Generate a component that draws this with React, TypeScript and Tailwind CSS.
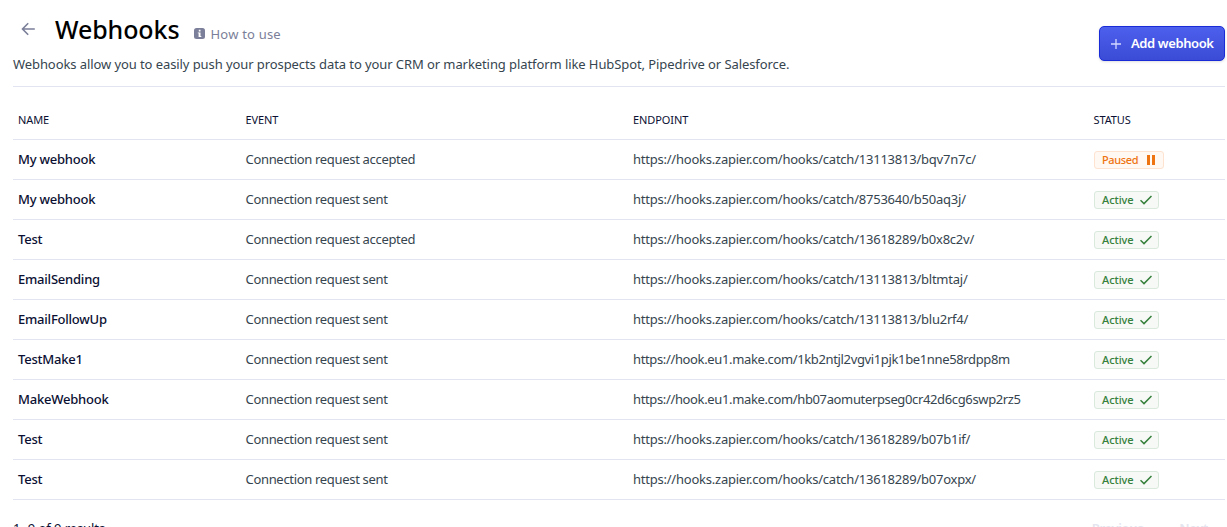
import clsx from "clsx";

type Status = "Active" | "Paused";

interface Webhook {
  name: string;
  event: string;
  endpoint: string;
  status: Status;
}

const WEBHOOKS: Webhook[] = [
  { name: "My webhook", event: "Connection request accepted", endpoint: "https://hooks.zapier.com/hooks/catch/13113813/bqv7n7c/", status: "Paused" },
  { name: "My webhook", event: "Connection request sent", endpoint: "https://hooks.zapier.com/hooks/catch/8753640/b50aq3j/", status: "Active" },
  { name: "Test", event: "Connection request accepted", endpoint: "https://hooks.zapier.com/hooks/catch/13618289/b0x8c2v/", status: "Active" },
  { name: "EmailSending", event: "Connection request sent", endpoint: "https://hooks.zapier.com/hooks/catch/13113813/bltmtaj/", status: "Active" },
  { name: "EmailFollowUp", event: "Connection request sent", endpoint: "https://hooks.zapier.com/hooks/catch/13113813/blu2rf4/", status: "Active" },
  { name: "TestMake1", event: "Connection request sent", endpoint: "https://hook.eu1.make.com/1kb2ntjl2vgvi1pjk1be1nne58rdpp8m", status: "Active" },
  { name: "MakeWebhook", event: "Connection request sent", endpoint: "https://hook.eu1.make.com/hb07aomuterpseg0cr42d6cg6swp2rz5", status: "Active" },
  { name: "Test", event: "Connection request sent", endpoint: "https://hooks.zapier.com/hooks/catch/13618289/b07b1if/", status: "Active" },
  { name: "Test", event: "Connection request sent", endpoint: "https://hooks.zapier.com/hooks/catch/13618289/b07oxpx/", status: "Active" },
];

const COLUMNS = ["NAME", "EVENT", "ENDPOINT", "STATUS"];

const ROW = "grid grid-cols-[227.5px_387.5px_460.5px_1fr] h-10 items-center border-b border-[#e2e5f1] pl-[5px]";

// long endpoints are set a little tighter
const LONG_ENDPOINT = 56;

function StatusBadge({ status }: { status: Status }) {
  const paused = status === "Paused";
  return (
    <span
      className={clsx(
        "mt-px flex h-[18px] items-center justify-between rounded-[3px] border pl-[7.5px] text-[11px] font-medium leading-4",
        paused
          ? "w-[70px] border-[#fde3d0] bg-[#fff8f3] pr-[7px] text-[#ee7411]"
          : "w-[65px] border-[#d9e9dc] bg-[#f6f9f6] pr-1.5 text-[#35803b]"
      )}
    >
      <span className={paused ? "tracking-[-0.35px]" : "tracking-[-0.05px]"}>{status}</span>
      {paused ? (
        <svg width="10" height="10" viewBox="0 0 10 10" fill="currentColor">
          <path d="M1 0h3v10H1zM6 0h3v10H6z" />
        </svg>
      ) : (
        <svg width="12" height="10" viewBox="0 0 12 10" fill="none" stroke="currentColor" strokeWidth="1.5">
          <path d="M.5 5.3 4 8.6 11.5.9" />
        </svg>
      )}
    </span>
  );
}

export default function App() {
  return (
    <div className="h-screen overflow-hidden bg-white pl-[13px] pr-0.5 font-['Noto_Sans',sans-serif] text-[13px] text-[#36454f]">
      {/* Header */}
      <header className="flex h-[87px] items-start justify-between border-b border-[#e2e5f1]">
        <div className="pt-2.5">
          <div className="flex h-10 items-center">
            <svg className="mb-0.5 ml-2 mr-5 shrink-0" width="14" height="14" viewBox="0 0 14 14" fill="none" stroke="#7b7f99" strokeWidth="1.6">
              <path d="M13.8 7H1.8M7.2 1.2 1.5 7l5.7 5.8" />
            </svg>
            <h1 className="w-[125px] whitespace-nowrap text-[25px] font-medium tracking-[-0.1px] text-black">Webhooks</h1>
            <a className="ml-3.5 mt-2 flex items-center gap-[5.5px] text-[#7b7f99]" href="#">
              <svg className="mb-px" width="11" height="11" viewBox="0 0 11 11">
                <rect width="11" height="11" rx="2.5" fill="#7b7f99" />
                <path d="M4.8 1.8h1.7v1.6H4.8zM3.8 4.4h2.7v3.7h.8V9H4.6V5.3h-.8z" fill="#fff" />
              </svg>
              <span className="whitespace-nowrap pt-px tracking-[0.2px]">How to use</span>
            </a>
          </div>
          <p className="mt-1 whitespace-nowrap leading-5 tracking-[-0.083px]">
            Webhooks allow you to easily push your prospects data to your CRM or marketing platform like HubSpot, Pipedrive or Salesforce.
          </p>
        </div>
        <button className="mt-[26px] flex h-[35px] w-[126px] items-center whitespace-nowrap rounded-[5px] border border-[#192bd7] bg-linear-to-b from-[#4c5fed] to-[#3b4bd5] pl-[11px] text-[13px] font-semibold tracking-[-0.4px] text-white shadow-sm">
          <svg className="mr-2.5 shrink-0" width="10" height="10" viewBox="0 0 10 10" stroke="#d3d8ff" strokeWidth="1.3">
            <path d="M5 0v10M0 5h10" />
          </svg>
          Add webhook
        </button>
      </header>

      {/* Table */}
      <div className="pt-[13px]">
        <div className={clsx(ROW, "pt-0.5 text-[11px] text-[#0b1033]")}>
          {COLUMNS.map((c) => (
            <span key={c} className="tracking-[-0.1px]">{c}</span>
          ))}
        </div>
        {WEBHOOKS.map((w) => (
          <div key={w.endpoint} className={ROW}>
            <span className="font-medium tracking-[-0.22px] text-[#0b1033]">{w.name}</span>
            <span className="tracking-[-0.32px]">{w.event}</span>
            <span className={w.endpoint.length > LONG_ENDPOINT ? "tracking-[-0.36px]" : "tracking-[-0.23px]"}>{w.endpoint}</span>
            <StatusBadge status={w.status} />
          </div>
        ))}
      </div>

      {/* Pagination */}
      <div className="flex justify-between pr-[17px] pt-[18px] leading-5">
        <span className="tracking-[-0.07px] text-[#0b1033]">1- 9 of 9 results</span>
        <div className="flex gap-9 font-semibold tracking-[-0.35px] text-[#e4e5ee]">
          <span>Previous</span>
          <span>Next</span>
        </div>
      </div>
    </div>
  );
}
